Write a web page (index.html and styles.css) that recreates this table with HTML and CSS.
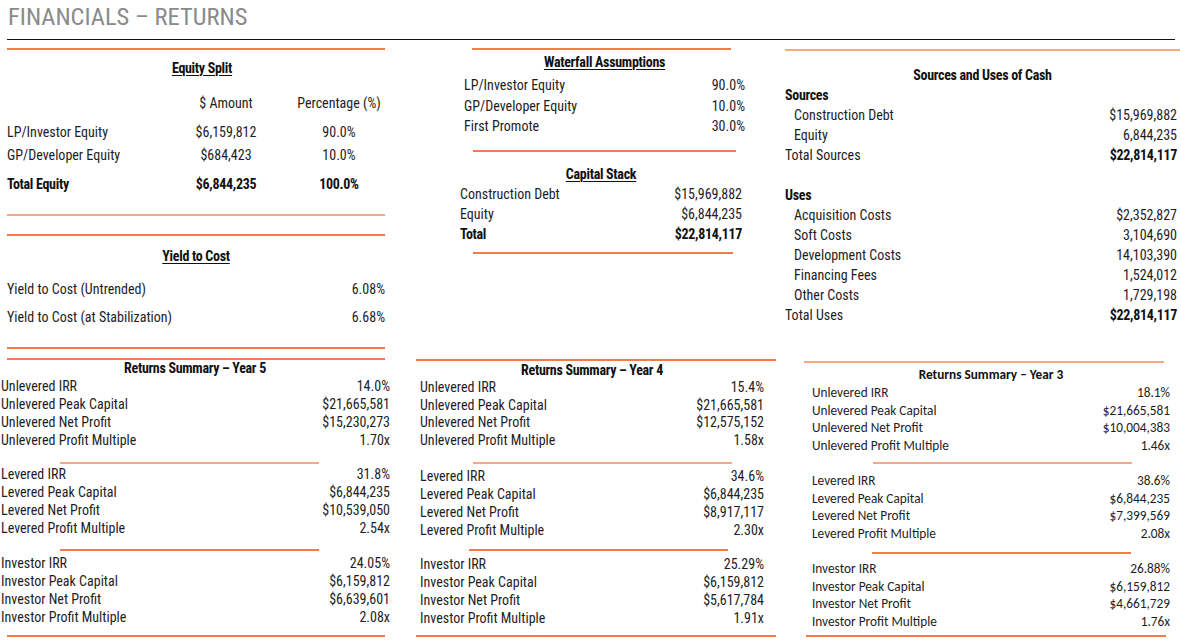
FILE: index.html
```html
<!DOCTYPE html>
<html>
<head>
<meta charset="utf-8">
<link rel="stylesheet" href="styles.css">
</head>
<body>
<div class="page">
  <header class="head">
    <h1 class="title">FINANCIALS – RETURNS</h1>
    <div class="blackline"></div>
  </header>

  <section class="top">
    <div class="panel tl">
      <div class="rule"></div>
      <h2 class="h u eq-h">Equity Split</h2>
      <div class="eq">
        <div class="eq-row r-head"><span></span><span class="c">$ Amount</span><span class="c pc">Percentage (%)</span></div>
        <div class="eq-row r-lp"><span>LP/Investor Equity</span><span class="c">$6,159,812</span><span class="c pc">90.0%</span></div>
        <div class="eq-row r-gp"><span>GP/Developer Equity</span><span class="c">$684,423</span><span class="c pc">10.0%</span></div>
        <div class="eq-row r-tot b"><span>Total Equity</span><span class="c">$6,844,235</span><span class="c pc">100.0%</span></div>
      </div>
      <div class="rule light r1"></div>
      <div class="rule r2"></div>
      <h2 class="h u ytc-h">Yield to Cost</h2>
      <div class="ytc">
        <div class="row ytc1"><span>Yield to Cost (Untrended)</span><span>6.08%</span></div>
        <div class="row"><span>Yield to Cost (at Stabilization)</span><span>6.68%</span></div>
      </div>
    </div>

    <div class="panel tm">
      <div class="rule wf-rule"></div>
      <h2 class="h u wf-h">Waterfall Assumptions</h2>
      <div class="wf">
        <div class="row"><span>LP/Investor Equity</span><span>90.0%</span></div>
        <div class="row"><span>GP/Developer Equity</span><span>10.0%</span></div>
        <div class="row"><span>First Promote</span><span>30.0%</span></div>
      </div>
      <div class="rule cs-rule1"></div>
      <h2 class="h u cs-h">Capital Stack</h2>
      <div class="cs">
        <div class="row"><span>Construction Debt</span><span>$15,969,882</span></div>
        <div class="row"><span>Equity</span><span>$6,844,235</span></div>
        <div class="row b"><span>Total</span><span>$22,814,117</span></div>
      </div>
      <div class="rule cs-rule2"></div>
    </div>

    <div class="panel tr">
      <div class="rule light su-rule"></div>
      <h2 class="h su-h">Sources and Uses of Cash</h2>
      <div class="su">
        <div class="row b"><span>Sources</span><span></span></div>
        <div class="row sub"><span>Construction Debt</span><span>$15,969,882</span></div>
        <div class="row sub"><span>Equity</span><span>6,844,235</span></div>
        <div class="row"><span>Total Sources</span><span class="b">$22,814,117</span></div>
        <div class="row"><span>&nbsp;</span><span></span></div>
        <div class="row b"><span>Uses</span><span></span></div>
        <div class="row sub"><span>Acquisition Costs</span><span>$2,352,827</span></div>
        <div class="row sub"><span>Soft Costs</span><span>3,104,690</span></div>
        <div class="row sub"><span>Development Costs</span><span>14,103,390</span></div>
        <div class="row sub"><span>Financing Fees</span><span>1,524,012</span></div>
        <div class="row sub"><span>Other Costs</span><span>1,729,198</span></div>
        <div class="row"><span>Total Uses</span><span class="b">$22,814,117</span></div>
      </div>
    </div>
  </section>

  <section class="bottom">
    <div class="panel y5">
      <div class="rule y5-r0"></div>
      <div class="rule y5-r1"></div>
      <h2 class="h ys-h">Returns Summary – Year 5</h2>
      <div class="grp g1">
        <div class="row"><span>Unlevered IRR</span><span>14.0%</span></div>
        <div class="row"><span>Unlevered Peak Capital</span><span>$21,665,581</span></div>
        <div class="row"><span>Unlevered Net Profit</span><span>$15,230,273</span></div>
        <div class="row"><span>Unlevered Profit Multiple</span><span>1.70x</span></div>
      </div>
      <div class="rule light sep s1"></div>
      <div class="grp g2">
        <div class="row"><span>Levered IRR</span><span>31.8%</span></div>
        <div class="row"><span>Levered Peak Capital</span><span>$6,844,235</span></div>
        <div class="row"><span>Levered Net Profit</span><span>$10,539,050</span></div>
        <div class="row"><span>Levered Profit Multiple</span><span>2.54x</span></div>
      </div>
      <div class="rule sep s2"></div>
      <div class="grp g3">
        <div class="row"><span>Investor IRR</span><span>24.05%</span></div>
        <div class="row"><span>Investor Peak Capital</span><span>$6,159,812</span></div>
        <div class="row"><span>Investor Net Profit</span><span>$6,639,601</span></div>
        <div class="row"><span>Investor Profit Multiple</span><span>2.08x</span></div>
      </div>
      <div class="rule y5-end"></div>
    </div>

    <div class="panel y4">
      <div class="rule y4-r0"></div>
      <h2 class="h ys-h">Returns Summary – Year 4</h2>
      <div class="grp g1">
        <div class="row"><span>Unlevered IRR</span><span>15.4%</span></div>
        <div class="row"><span>Unlevered Peak Capital</span><span>$21,665,581</span></div>
        <div class="row"><span>Unlevered Net Profit</span><span>$12,575,152</span></div>
        <div class="row"><span>Unlevered Profit Multiple</span><span>1.58x</span></div>
      </div>
      <div class="rule light sep s1"></div>
      <div class="grp g2">
        <div class="row"><span>Levered IRR</span><span>34.6%</span></div>
        <div class="row"><span>Levered Peak Capital</span><span>$6,844,235</span></div>
        <div class="row"><span>Levered Net Profit</span><span>$8,917,117</span></div>
        <div class="row"><span>Levered Profit Multiple</span><span>2.30x</span></div>
      </div>
      <div class="rule sep s2"></div>
      <div class="grp g3">
        <div class="row"><span>Investor IRR</span><span>25.29%</span></div>
        <div class="row"><span>Investor Peak Capital</span><span>$6,159,812</span></div>
        <div class="row"><span>Investor Net Profit</span><span>$5,617,784</span></div>
        <div class="row"><span>Investor Profit Multiple</span><span>1.91x</span></div>
      </div>
      <div class="rule y4-end"></div>
    </div>

    <div class="panel y3">
      <div class="rule light y3-r0"></div>
      <h2 class="h ys-h">Returns Summary – Year 3</h2>
      <div class="grp g1">
        <div class="row"><span>Unlevered IRR</span><span>18.1%</span></div>
        <div class="row"><span>Unlevered Peak Capital</span><span>$21,665,581</span></div>
        <div class="row"><span>Unlevered Net Profit</span><span>$10,004,383</span></div>
        <div class="row"><span>Unlevered Profit Multiple</span><span>1.46x</span></div>
      </div>
      <div class="rule light sep s1"></div>
      <div class="grp g2">
        <div class="row"><span>Levered IRR</span><span>38.6%</span></div>
        <div class="row"><span>Levered Peak Capital</span><span>$6,844,235</span></div>
        <div class="row"><span>Levered Net Profit</span><span>$7,399,569</span></div>
        <div class="row"><span>Levered Profit Multiple</span><span>2.08x</span></div>
      </div>
      <div class="rule sep s2"></div>
      <div class="grp g3">
        <div class="row"><span>Investor IRR</span><span>26.88%</span></div>
        <div class="row"><span>Investor Peak Capital</span><span>$6,159,812</span></div>
        <div class="row"><span>Investor Net Profit</span><span>$4,661,729</span></div>
        <div class="row"><span>Investor Profit Multiple</span><span>1.76x</span></div>
      </div>
      <div class="rule y3-end"></div>
    </div>
  </section>
</div>
</body>
</html>
```

FILE: styles.css
```css
* { box-sizing: border-box; margin: 0; padding: 0; }

html, body {
  width: 1180px;
  height: 642px;
  overflow: hidden;
  background: #ffffff;
}

body {
  font-family: "Liberation Sans Narrow", "Roboto Condensed", "Liberation Sans", sans-serif;
  font-size: 14px;
  color: #1d1d1f;
}

.page { width: 1180px; }

/* header */
.head { height: 40px; }
.title {
  font-weight: normal;
  font-size: 24.5px;
  line-height: 30px;
  color: #8a8a8a;
  padding: 2px 0 0 8px;
  height: 39px;
}
.blackline {
  height: 1px;
  background: #111;
  margin: 0 5px 0 7px;
}

/* generic */
.rule { height: 2px; background: #f47a4b; }
.rule.light { background: #f9a685; }
.h {
  font-size: 14px;
  font-weight: bold;
  line-height: 18px;
  text-align: center;
  letter-spacing: -0.3px;
  color: #111;
}
.h.u { text-decoration: underline; text-underline-offset: 2px; text-decoration-thickness: 1px; }
.b { font-weight: bold; font-size: 14px; letter-spacing: -0.3px; color: #111; }
.row { display: flex; justify-content: space-between; white-space: nowrap; }

/* nudge the bottom tables' text rows down to match the reference baseline */
.grp { padding-top: 1px; margin-bottom: -1px; }

/* top section */
.top {
  display: grid;
  grid-template-columns: 378px 400px 395px;
  padding-left: 7px;
  height: 300px;
  align-items: start;
}

/* top left */
.tl .rule:first-child { margin-top: 8px; }
.eq-h { margin-top: 9px; padding-left: 12px; }
.eq { margin-top: 17px; }
.eq-row {
  display: grid;
  grid-template-columns: 159px 120px 99px;
  line-height: 18px;
  white-space: nowrap;
}
.eq-row .c { text-align: center; }
.eq-row .pc { padding-left: 7px; }
.r-head { height: 29px; }
.r-lp { height: 23px; }
.r-gp { height: 29px; }
.r-tot { height: 18px; }
.tl .r1 { margin-top: 21px; }
.tl .r2 { margin-top: 18px; }
.ytc-h { margin-top: 11px; }
.ytc { margin-top: 15px; line-height: 18px; }
.ytc1 { height: 28px; }

/* top middle */
.wf-rule { margin: 8px 0 0 87px; width: 259px; }
.wf-h { margin: 4px 0 0 79px; width: 281px; line-height: 16px; }
.wf { margin: 5px 0 0 79px; width: 281px; line-height: 20.5px; }
.cs-rule1 { margin: 13.5px 0 0 88px; width: 263px; }
.cs-h { margin: 13px 0 0 75px; width: 282px; }
.cs { margin: 1px 0 0 75px; width: 282px; line-height: 20px; }
.cs-rule2 { margin: 8px 0 0 88px; width: 260px; }

/* top right */
.su-rule { margin-top: 9px; }
.su-h { margin-top: 15px; }
.su { margin-top: 1px; line-height: 20px; padding-right: 3px; }
.su .sub { padding-left: 9px; }

/* bottom */
.bottom {
  display: grid;
  grid-template-columns: 390px 390px 400px;
  align-items: start;
  font-size: 14px;
}
.ys-h { line-height: 16px; }

/* year 5 */
.y5-r0 { margin: 7px 5px 0 7px; }
.y5-r1 { margin: 9px 5px 0 7px; }
.y5 .grp { line-height: 18px; padding-left: 1px; }
.y5 .s1 { margin: 14px 0 0 60px; width: 259px; }
.y5 .s2 { margin: 13px 0 0 60px; width: 259px; }
.y5 .g3 { margin-top: 2px; }
.y5-end { margin: 10px 5px 0 7px; }

/* year 4 */
.y4-r0 { margin: 19px 0 0 26px; width: 360px; }
.y4 .ys-h { margin: 1px 16px 0 30px; }
.y4 .grp { padding-left: 30px; padding-right: 16px; line-height: 18px; }
.y4 .g1 { line-height: 17.67px; }
.y4 .s1 { margin: 13.3px 0 0 83px; width: 259px; }
.y4 .g2 { margin-top: 2px; }
.y4 .s2 { margin: 11px 0 0 79px; width: 259px; }
.y4 .g3 { margin-top: 3px; }
.y4-end { margin: 9px 0 0 26px; width: 360px; }

/* year 3 — different typeface */
.y3 { font-family: "Carlito", "Open Sans", sans-serif; font-size: 13.3px; }
.y3 .ys-h { font-size: 13.3px; letter-spacing: 0; margin: 4px 10px 0 32px; }
.y3-r0 { margin: 21px 0 0 24px; width: 360px; }
.y3 .grp { padding-left: 32px; padding-right: 10px; line-height: 17.67px; }
.y3 .s1 { margin: 8.3px 0 0 93px; width: 259px; }
.y3 .g2 { margin-top: 7px; }
.y3 .s2 { margin: 10.3px 0 0 92px; width: 259px; }
.y3 .g3 { margin-top: 5px; }
.y3-end { margin: 5.3px 0 0 26px; width: 360px; }
```
